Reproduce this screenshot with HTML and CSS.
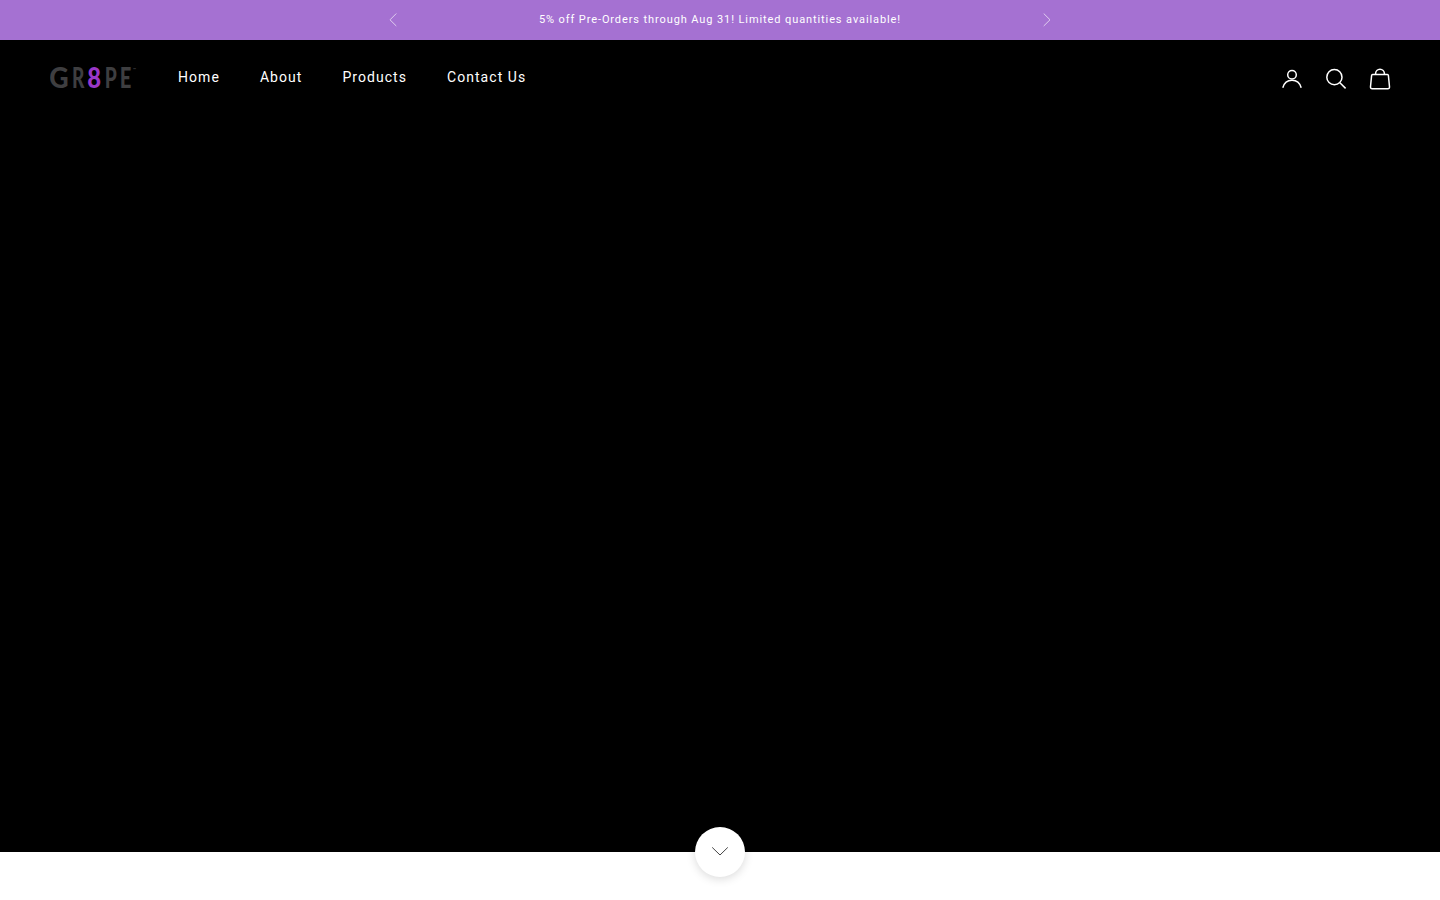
FILE: index.html
```html
<!DOCTYPE html>
<html lang="en">
<head>
    <meta charset="utf-8">
    <title>GR8PE</title>
    <link rel="stylesheet" href="styles.css">
</head>
<body>

    <div class="announcement">
        <button class="arrow" aria-label="Previous">
            <svg width="8" height="14" viewBox="0 0 8 14"><path d="M7.3 .5 1 6.8l6.3 6.2"/></svg>
        </button>
        <p class="announcement-text">5% off Pre-Orders through Aug 31! Limited quantities available!</p>
        <button class="arrow" aria-label="Next">
            <svg width="8" height="14" viewBox="0 0 8 14"><path d="M.7 .5 7 6.8 .7 13"/></svg>
        </button>
    </div>

    <section class="hero">
        <header class="header">
            <a href="#" class="logo">
                <svg width="88" height="36" viewBox="0 0 88 36">
                    <text x="-0.8" y="28" textLength="19.4" lengthAdjust="spacingAndGlyphs">G</text>
                    <text x="22" y="28" textLength="12.4" lengthAdjust="spacingAndGlyphs">R</text>
                    <text x="37.3" y="28" textLength="13.8" lengthAdjust="spacingAndGlyphs" class="eight">8</text>
                    <text x="54.8" y="28" textLength="12" lengthAdjust="spacingAndGlyphs">P</text>
                    <text x="69.8" y="28" textLength="11.6" lengthAdjust="spacingAndGlyphs">E</text>
                    <text x="83" y="11" class="tm">™</text>
                </svg>
            </a>
            <nav class="nav">
                <a href="#">Home</a>
                <a href="#">About</a>
                <a href="#">Products</a>
                <a href="#">Contact Us</a>
            </nav>
            <div class="icons">
                <a href="#" aria-label="Account">
                    <svg width="22" height="22" viewBox="0 0 22 22"><circle cx="11" cy="6.7" r="4.3"/><path d="M1.8 19.8c1.2-4.5 4.6-7.5 9.2-7.5s8 3 9.2 7.5"/></svg>
                </a>
                <a href="#" aria-label="Search">
                    <svg width="22" height="22" viewBox="0 0 22 22"><circle cx="9.4" cy="9.2" r="7.6"/><path d="m14.9 14.7 5.7 5.7"/></svg>
                </a>
                <a href="#" aria-label="Cart">
                    <svg width="22" height="22" viewBox="0 0 22 22"><path d="M3.6 6.6h14.8q.9 0 1 .9l1.1 11.3c.1 1.2-.5 2-1.7 2H3.2c-1.2 0-1.8-.8-1.7-2L2.6 7.5q.1-.9 1-.9z"/><path d="M6.6 6.6v-1a4.4 4.4 0 0 1 8.8 0v1"/></svg>
                </a>
            </div>
        </header>
        <button class="scroll-btn" aria-label="Scroll down">
            <svg width="18" height="10" viewBox="0 0 18 10"><path d="m1.2 .4 7.8 7.6L16.8 .4"/></svg>
        </button>
    </section>

</body>
</html>
```

FILE: styles.css
```css
* {
    margin: 0;
    padding: 0;
    box-sizing: border-box;
}

body {
    min-height: 100vh;
    font-family: Roboto, "Liberation Sans", sans-serif;
    background-color: #fff;
}

a {
    color: inherit;
    text-decoration: none;
}

button {
    border: none;
    background: none;
    cursor: pointer;
}

svg {
    display: block;
    fill: none;
    stroke: currentColor;
}

.announcement {
    display: flex;
    justify-content: space-between;
    align-items: center;
    height: 40px;
    padding: 0 389px;
    background-color: #a571d2;
    color: #fff;
}

.announcement-text {
    padding-bottom: 2px;
    font-size: 11px;
    letter-spacing: 0.9px;
}

.arrow {
    color: #fff;
    opacity: 0.65;
}

.hero {
    position: relative;
    height: 812px;
    background-color: #000;
    color: #fff;
}

.header {
    display: flex;
    align-items: center;
    height: 76px;
    padding: 0 49px 0 50px;
}

.logo {
    margin-right: 40px;
}

.logo text {
    font-family: Lato, sans-serif;
    font-size: 28px;
    font-weight: 900;
    fill: #3e3e40;
    stroke: none;
}

.logo .eight {
    fill: #9a38c8;
}

.logo .tm {
    font-size: 4px;
}

.nav {
    display: flex;
    gap: 40px;
    padding-bottom: 2px;
    font-size: 14px;
    letter-spacing: 1.05px;
}

.icons {
    display: flex;
    gap: 22px;
    margin-left: auto;
    padding-top: 2px;
}

.icons svg {
    stroke-width: 1.5;
}

.scroll-btn {
    position: absolute;
    left: 50%;
    bottom: -25px;
    display: flex;
    justify-content: center;
    align-items: center;
    width: 50px;
    height: 50px;
    margin-left: -25px;
    border-radius: 50%;
    background-color: #fff;
    color: #444;
    box-shadow: 0 2px 10px rgba(0, 0, 0, 0.15);
}
```
